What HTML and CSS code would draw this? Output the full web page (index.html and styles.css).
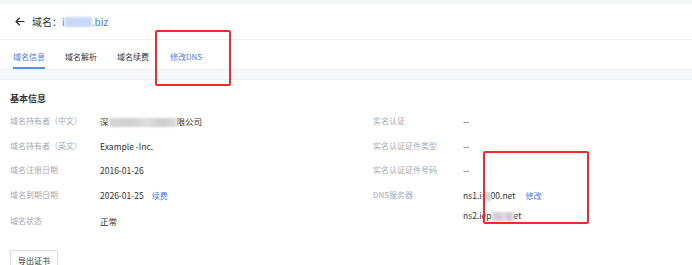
FILE: index.html
```html
<!DOCTYPE html>
<html lang="zh-CN">
<head>
  <meta charset="UTF-8" />
  <meta name="viewport" content="width=device-width, initial-scale=1.0" />
  <title>域名信息</title>
  <link rel="stylesheet" href="styles.css">
</head>
<body>
  <div class="top-strip"></div>
  <header class="page-header">
    <span class="back">
      <svg width="10" height="9" viewBox="0 0 10 9">
        <path d="M9.5 4.5H1M4.8 0.8L1 4.5l3.8 3.7" fill="none" stroke="#333" stroke-width="1.2"/>
      </svg>
    </span>
    <span class="title">域名：</span>
    <span class="title-link">i<span class="blur blur-blue" style="width: 27px"></span>.biz</span>
  </header>

  <nav class="tabs">
    <span class="tab active">域名信息</span>
    <span class="tab">域名解析</span>
    <span class="tab">域名续费</span>
    <span class="tab hover">修改DNS</span>
  </nav>
  <div class="band"></div>

  <div class="content">
    <h3>基本信息</h3>
    <div class="info">
      <div class="col">
        <div class="row"><span class="label">域名持有者（中文）</span><span class="value">深<span class="blur" style="width: 68px"></span>限公司</span></div>
        <div class="row"><span class="label">域名持有者（英文）</span><span class="value">Example -Inc.</span></div>
        <div class="row"><span class="label">域名注册日期</span><span class="value">2016-01-26</span></div>
        <div class="row"><span class="label">域名到期日期</span><span class="value">2026-01-25<a class="link renew">续费</a></span></div>
        <div class="row"><span class="label">域名状态</span><span class="value">正常</span></div>
      </div>
      <div class="col">
        <div class="row"><span class="label">实名认证</span><span class="value">--</span></div>
        <div class="row"><span class="label">实名认证证件类型</span><span class="value">--</span></div>
        <div class="row"><span class="label">实名认证证件号码</span><span class="value">--</span></div>
        <div class="row">
          <span class="label">DNS服务器</span>
          <span class="value">
            <span class="ns">ns1.i<span class="blur" style="width: 9px"></span>00.net<a class="link">修改</a></span>
            <span class="ns second">ns2.iep<span class="blur" style="width: 22px"></span>et</span>
          </span>
        </div>
      </div>
    </div>
    <button class="btn">导出证书</button>
  </div>

  <div class="mark mark-tab"></div>
  <div class="mark mark-dns"></div>
</body>
</html>
```

FILE: styles.css
```css
body {
  margin: 0;
  font-family: "Noto Sans CJK SC", "Noto Sans", sans-serif;
  background: #fff;
  color: #333;
  overflow: hidden;
}
.top-strip {
  height: 4px;
  background: #f5f6f8;
}
.page-header {
  height: 35px;
  display: flex;
  align-items: center;
  padding-left: 15px;
  border-bottom: 1px solid #eef0f3;
  font-size: 10px;
}
.back {
  display: flex;
  margin-right: 7px;
}
.title {
  color: #333;
}
.title-link {
  color: #3f7bf0;
  display: flex;
  align-items: center;
}
.blur {
  display: inline-block;
  height: 9px;
  background: linear-gradient(90deg, #d6d6d6, #cfcfcf 30%, #dedede 55%, #cbcbcb 80%, #e2e2e2);
  filter: blur(1.2px);
  vertical-align: middle;
}
.blur-blue {
  height: 10px;
  background: #c9d8f6;
}
.tabs {
  display: flex;
  height: 29px;
  padding-left: 13px;
  gap: 20px;
}
.tab {
  font-size: 8px;
  line-height: 12px;
  padding-top: 11px;
  padding-bottom: 4px;
  border-bottom: 2px solid transparent;
  color: #333;
}
.tab.active {
  color: #3f7bf0;
  border-bottom-color: #5b8ff5;
}
.tab.hover {
  color: #4a80f0;
  margin-left: 1px;
}
.band {
  height: 9px;
  background: #f7f8fa;
  border-top: 1px solid #eceef1;
  border-bottom: 1px solid #f0f1f3;
}
.content {
  padding: 0 10px;
}
h3 {
  margin: 0;
  padding-top: 12px;
  font-size: 9px;
  line-height: 14px;
  font-weight: bold;
  color: #333;
  height: 17px;
}
.info {
  display: flex;
}
.col {
  width: 363px;
  flex-shrink: 0;
}
.col + .col {
  width: auto;
  flex: 1;
}
.row {
  display: flex;
  line-height: 24.7px;
  font-size: 8px;
}
.label {
  width: 90px;
  flex-shrink: 0;
  color: #a4a9b2;
}
.value {
  font-size: 8.5px;
  color: #333;
}
.link {
  color: #3f7bf0;
  margin-left: 10px;
  font-size: 8px;
}
.link.renew {
  margin-left: 8px;
}
.ns {
  display: block;
}
.ns.second {
  line-height: 13.3px;
}
.btn {
  margin-top: 16px;
  font-family: inherit;
  font-size: 8px;
  color: #333;
  background: #fff;
  border: 1px solid #d9dce1;
  border-radius: 2px;
  height: 22px;
  padding: 0 7px;
}
.mark {
  position: absolute;
  border: 2px solid #f5282a;
  border-radius: 2px;
}
.mark-tab {
  left: 155px;
  top: 30px;
  width: 72px;
  height: 52px;
}
.mark-dns {
  left: 483px;
  top: 151px;
  width: 102px;
  height: 69px;
}
```
